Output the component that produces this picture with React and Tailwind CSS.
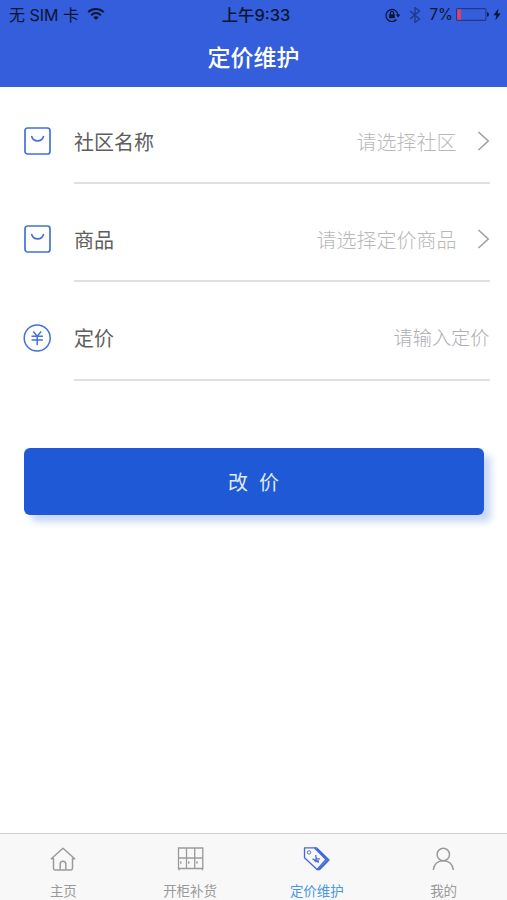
import React, { useState } from "react";

const BagIcon = () => (
  <svg width="28" height="28" viewBox="0 0 28 28" fill="none" stroke="#4271dc" strokeWidth="1.7" strokeLinecap="round">
    <rect x="2" y="1" width="25" height="26" rx="2.5" />
    <path d="M8.7 9.5c1.8 5.8 10 5.8 11.8 0" />
  </svg>
);

const YuanIcon = () => (
  <svg width="28" height="28" viewBox="0 0 28 28" fill="none" stroke="#4271dc" strokeWidth="1.5">
    <circle cx="14.2" cy="14" r="13" />
    <path d="M10.3 7.6l3.9 4.6 3.9-4.6M8.5 12.2h11.4M8.5 16h11.4M14.2 12.2v9" />
  </svg>
);

const ChevronIcon = () => (
  <svg width="13" height="20" viewBox="0 0 13 20" fill="none" stroke="#a3a3a3" strokeWidth="1.7">
    <path d="M1.5 1l9.7 9-9.7 9" />
  </svg>
);

const HomeIcon = () => (
  <svg width="28" height="26" viewBox="0 0 28 26" fill="none" stroke="currentColor" strokeWidth="1.5" strokeLinejoin="round">
    <path d="M2.3 12.8L14 2.2l11.7 10.6h-2.2v9.5a1.6 1.6 0 0 1-1.6 1.6H6.1a1.6 1.6 0 0 1-1.6-1.6v-9.5z" />
    <path d="M11.2 23.5V18a2.8 2.8 0 0 1 5.6 0v5.5" />
  </svg>
);

const CabinetIcon = () => (
  <svg width="28" height="26" viewBox="0 0 28 26" fill="none" stroke="currentColor" strokeWidth="1.3">
    <path d="M2.5 2h24.3v20.5H2.5zM10.5 2v20.5M18.7 2v20.5M2.5 12h24.3M3 22.5v1.8M26.3 22.5v1.8" />
    <path d="M4.8 15.3v2.4M12.8 15.3v2.4M21 15.3v2.4" />
  </svg>
);

const TagIcon = () => (
  <svg width="28" height="26" viewBox="0 0 28 26" fill="none" stroke="#4268d6" strokeWidth="1.3" strokeLinejoin="round">
    <path d="M1.5 1.8h9.8l11.7 11.7-9 10L1.5 11.7z" />
    <path d="M11.3 1.8h2.5l12.3 12.2-9.3 9.7H14M13.2 2.6l11.3 11.3-9 9.6" strokeWidth="1.1" />
    <circle cx="6" cy="6.4" r="1.7" strokeWidth="0.9" />
    <path d="M12.8 9l.4 3.9 3.7-.1M9.6 12.9l6.2 3.6M13.2 12.9l-.5 3.4M11 14.6l5 .3" strokeWidth="1.3" />
  </svg>
);

const UserIcon = () => (
  <svg width="28" height="26" viewBox="0 0 28 26" fill="none" stroke="currentColor" strokeWidth="1.5">
    <circle cx="13.3" cy="8.5" r="6.2" />
    <path d="M3.3 24c.4-5.5 4.2-9.3 10-9.3s9.6 3.8 10 9.3" />
  </svg>
);

const StatusBar = () => (
  <div className="grid h-[30px] grid-cols-3 items-center text-[16px] leading-none text-[#0b1533]">
    <div className="flex items-center pl-[9px]">
      <span className="whitespace-pre">无 SIM 卡</span>
      <svg className="mb-0.5 ml-2" width="18" height="14" viewBox="0 0 18 14" fill="none" stroke="currentColor" strokeWidth="2">
        <path d="M1.2 5.1c4.6-4 11-4 15.6 0M4.1 8.2c3-2.6 6.8-2.6 9.8 0" />
        <path d="M9 13l-2.7-2.7c1.6-1.4 3.8-1.4 5.4 0z" fill="currentColor" stroke="none" />
      </svg>
    </div>
    <div className="pl-[5px] text-center text-[16.4px] font-medium">上午9:33</div>
    <div className="flex items-center justify-end pr-[6px]">
      <svg className="mb-px" width="16" height="14" viewBox="0 0 16 14" fill="none" stroke="currentColor" strokeWidth="1.2">
        <path d="M11.5 11.5A6 6 0 1 1 13 7" />
        <path d="M10.8 6.6h4.6l-2.3 2.9z" fill="currentColor" stroke="none" />
        <rect x="4.2" y="6.2" width="5.6" height="4" fill="currentColor" stroke="none" />
        <path d="M5.4 6.3V5a1.6 1.6 0 0 1 3.2 0v1.3" />
      </svg>
      <svg className="mb-px ml-2 opacity-50" width="12" height="16" viewBox="0 0 12 16" fill="none" stroke="currentColor" strokeWidth="1.3">
        <path d="M1 4l9.5 8L6 15.3V.7L10.5 4 1 12" />
      </svg>
      <span className="ml-[8px] text-[15.2px]">7%</span>
      <svg className="mb-px ml-[3px]" width="34" height="13" viewBox="0 0 34 13" fill="none">
        <rect x=".6" y=".6" width="29.3" height="11.8" rx="1" stroke="#24378c" strokeWidth="1.1" />
        <rect x="1.3" y="1.3" width="3.5" height="10.4" fill="#e2445a" />
        <path d="M31 4.2c2.5.5 2.5 4.1 0 4.6z" fill="currentColor" />
      </svg>
      <svg className="mb-0.5 ml-[3px]" width="8" height="13" viewBox="0 0 8 13" fill="currentColor">
        <path d="M5.5.5L.4 7.3h3l-1.1 5.2 5.4-7h-3z" />
      </svg>
    </div>
  </div>
);

const fields = [
  { label: "社区名称", placeholder: "请选择社区", icon: BagIcon, select: true },
  { label: "商品", placeholder: "请选择定价商品", icon: BagIcon, select: true },
  { label: "定价", placeholder: "请输入定价", icon: YuanIcon, select: false },
];

const tabs = [
  { name: "主页", icon: HomeIcon },
  { name: "开柜补货", icon: CabinetIcon },
  { name: "定价维护", icon: TagIcon },
  { name: "我的", icon: UserIcon },
];

const App = () => {
  const [activeTab, setActiveTab] = useState("定价维护");

  return (
    <div className="flex h-[900px] w-full flex-col overflow-hidden bg-white font-['Inter','Noto_Sans_CJK_SC',sans-serif]">
      <header className="h-[87px] bg-[#345edb]">
        <StatusBar />
        <h1 className="pt-[11px] text-center text-[23px] leading-[34px] font-medium text-white">定价维护</h1>
      </header>

      <main className="flex-1 pt-[13px]">
        <div className="flex flex-col gap-[14.4px] pr-[17.5px] pl-[23px]">
          {fields.map(({ label, placeholder, icon: Icon, select }) => (
            <div key={label} className="flex items-center">
              <span className="pb-0.5">
                <Icon />
              </span>
              <div className="ml-[23px] flex h-[84px] flex-1 items-center border-b-2 border-[#e0e0de] text-[20px]">
                <span className="pt-[3px] text-[#5e5e5e]">{label}</span>
                <span
                  className={
                    select
                      ? "ml-auto pt-[3px] font-light text-[#b8b8b8]"
                      : "ml-auto pt-[2px] text-[19.2px] font-light text-[#aeaeb4]"
                  }
                >
                  {placeholder}
                </span>
                {select && (
                  <span className="ml-5">
                    <ChevronIcon />
                  </span>
                )}
              </div>
            </div>
          ))}
        </div>

        {/* Submit */}
        <button
          type="button"
          className="mt-[67px] ml-6 h-[67px] w-[460px] rounded-md bg-[#2059d6] pt-[3px] pr-px text-[20px] whitespace-pre text-[#dfeaff] shadow-[7px_7px_7px_rgba(32,89,214,0.24)]"
        >
          改<span className="ml-[11px]">价</span>
        </button>
      </main>

      {/* Bottom tabs */}
      <nav className="grid h-[67px] grid-cols-4 border-t border-[#cfcfcf] bg-[#f8f8f8]">
        {tabs.map(({ name, icon: Icon }) => (
          <button
            key={name}
            type="button"
            onClick={() => setActiveTab(name)}
            className={`flex flex-col items-center pt-3 text-[13.5px] leading-5 ${
              activeTab === name ? "text-[#4a98e4]" : "text-[#9a9a9a]"
            }`}
          >
            <Icon />
            <span className="mt-[9px]">{name}</span>
          </button>
        ))}
      </nav>
    </div>
  );
};

export default App;
